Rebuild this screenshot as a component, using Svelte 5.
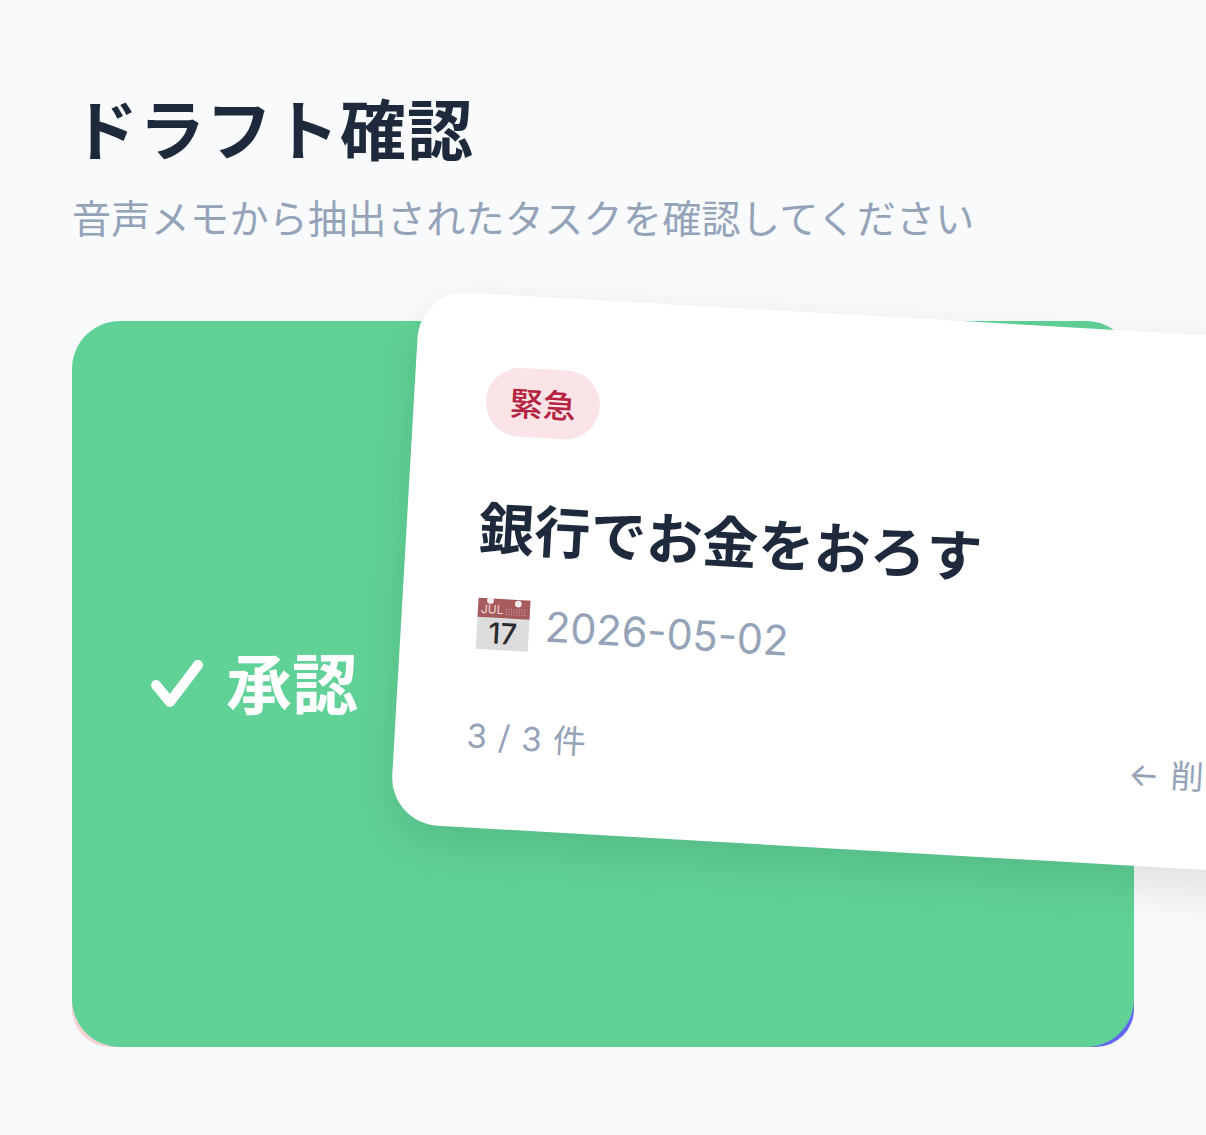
<script>
  const draft = { priority: '緊急', title: '銀行でお金をおろす', date: '2026-05-02' };
</script>

<div class="page">
  <header class="head">
    <h1>ドラフト確認</h1>
    <p>音声メモから抽出されたタスクを確認してください</p>
  </header>

  <div class="stack">
    <div class="under"></div>
    <div class="approve">
      <svg class="check" viewBox="0 0 54 50" aria-hidden="true">
        <path d="M6 26 L20 43 L48 6" fill="none" stroke="#fff" stroke-width="10" stroke-linecap="round" stroke-linejoin="round" />
      </svg>
      <span class="approve-label">承認</span>
    </div>

    <article class="card">
      <span class="tag">{draft.priority}</span>
      <h2>{draft.title}</h2>
      <div class="date">
        <svg class="cal" viewBox="0 0 56 56" aria-hidden="true">
          <rect x="2" y="3" width="52" height="51" fill="#dcdcdc" />
          <rect x="2" y="3" width="52" height="19" fill="#a65a5c" />
          <circle cx="14" cy="5" r="3.4" fill="#f4eeee" />
          <circle cx="42" cy="7" r="3.4" fill="#f4eeee" />
          <path d="M30 13 H51 M30 15.5 H51 M30 18 H51" stroke="#d9b4b4" stroke-width="1" stroke-dasharray="1 1.6" fill="none" />
          <text x="5" y="18" class="month">JUL</text>
          <text x="28" y="48" class="day" text-anchor="middle">17</text>
        </svg>
        <span>{draft.date}</span>
      </div>
      <div class="foot">
        <span>3 / 3 件</span>
        <span class="hint">← 削除</span>
      </div>
    </article>
  </div>
</div>

<style>
  :global(body) {
    margin: 0;
    background: #f8fafc;
  }

  .page {
    box-sizing: border-box;
    width: 1206px;
    height: 1135px;
    padding: 86px 72px 0;
    overflow: hidden;
    background: #f8fafc;
    font-family: "Noto Sans CJK JP", "Inter", sans-serif;
  }

  .head {
    margin-bottom: 80px;
  }

  h1 {
    margin: 0;
    font-size: 66px;
    line-height: 80px;
    font-weight: 700;
    letter-spacing: 1px;
    color: #1e293b;
  }

  .head p {
    margin: 25px 0 0;
    font-size: 39px;
    line-height: 50px;
    letter-spacing: 0.35px;
    color: #94a3b8;
  }

  .stack {
    position: relative;
    width: 1062px;
    height: 726px;
  }

  .under {
    position: absolute;
    inset: 50% 0 0;
    border-radius: 0 0 38px 38px;
    background: linear-gradient(90deg, #f6d3d6 50%, #6366f1 50%);
  }

  .approve {
    position: absolute;
    inset: 0;
    display: flex;
    align-items: center;
    gap: 22px;
    padding-left: 78px;
    border-radius: 48px;
    background: #60d297;
    color: #fff;
    font-size: 66px;
    font-weight: 700;
  }

  .approve-label {
    margin-bottom: 8px;
  }

  .check {
    width: 54px;
    height: 50px;
  }

  .card {
    position: absolute;
    top: 0;
    left: 0;
    box-sizing: border-box;
    width: 100%;
    height: 534px;
    padding: 72px;
    border-radius: 48px;
    background: #fff;
    box-shadow: 0 18px 48px rgba(0, 0, 0, 0.11);
    transform: translate(332px, -1px) rotate(3.3deg);
  }

  .tag {
    display: inline-block;
    padding: 13px 24px 14px;
    border-radius: 36px;
    background: #fbe4e7;
    color: #b4233f;
    font-size: 33px;
    line-height: 42px;
    font-weight: 500;
  }

  h2 {
    margin: 54px 0 0;
    font-size: 56px;
    line-height: 72px;
    font-weight: 700;
    color: #1e293b;
  }

  .date {
    display: flex;
    align-items: center;
    gap: 14px;
    margin-top: 32px;
    font-family: "Inter", "Noto Sans CJK JP", sans-serif;
    font-size: 41.5px;
    line-height: 60px;
    color: #94a3b8;
  }

  .cal {
    width: 56px;
    height: 56px;
    margin-left: 2px;
  }

  .month {
    font-family: "Inter", sans-serif;
    font-size: 12px;
    fill: #f0dcdc;
  }

  .day {
    font-family: "Inter", sans-serif;
    font-size: 29px;
    font-weight: 500;
    fill: #2b2b2b;
  }

  .foot {
    display: flex;
    margin-top: 58px;
    font-family: "Inter", "Noto Sans CJK JP", sans-serif;
    font-size: 33px;
    line-height: 50px;
    letter-spacing: 1px;
    color: #94a3b8;
  }

  .hint {
    margin-left: 542px;
    white-space: nowrap;
  }
</style>
